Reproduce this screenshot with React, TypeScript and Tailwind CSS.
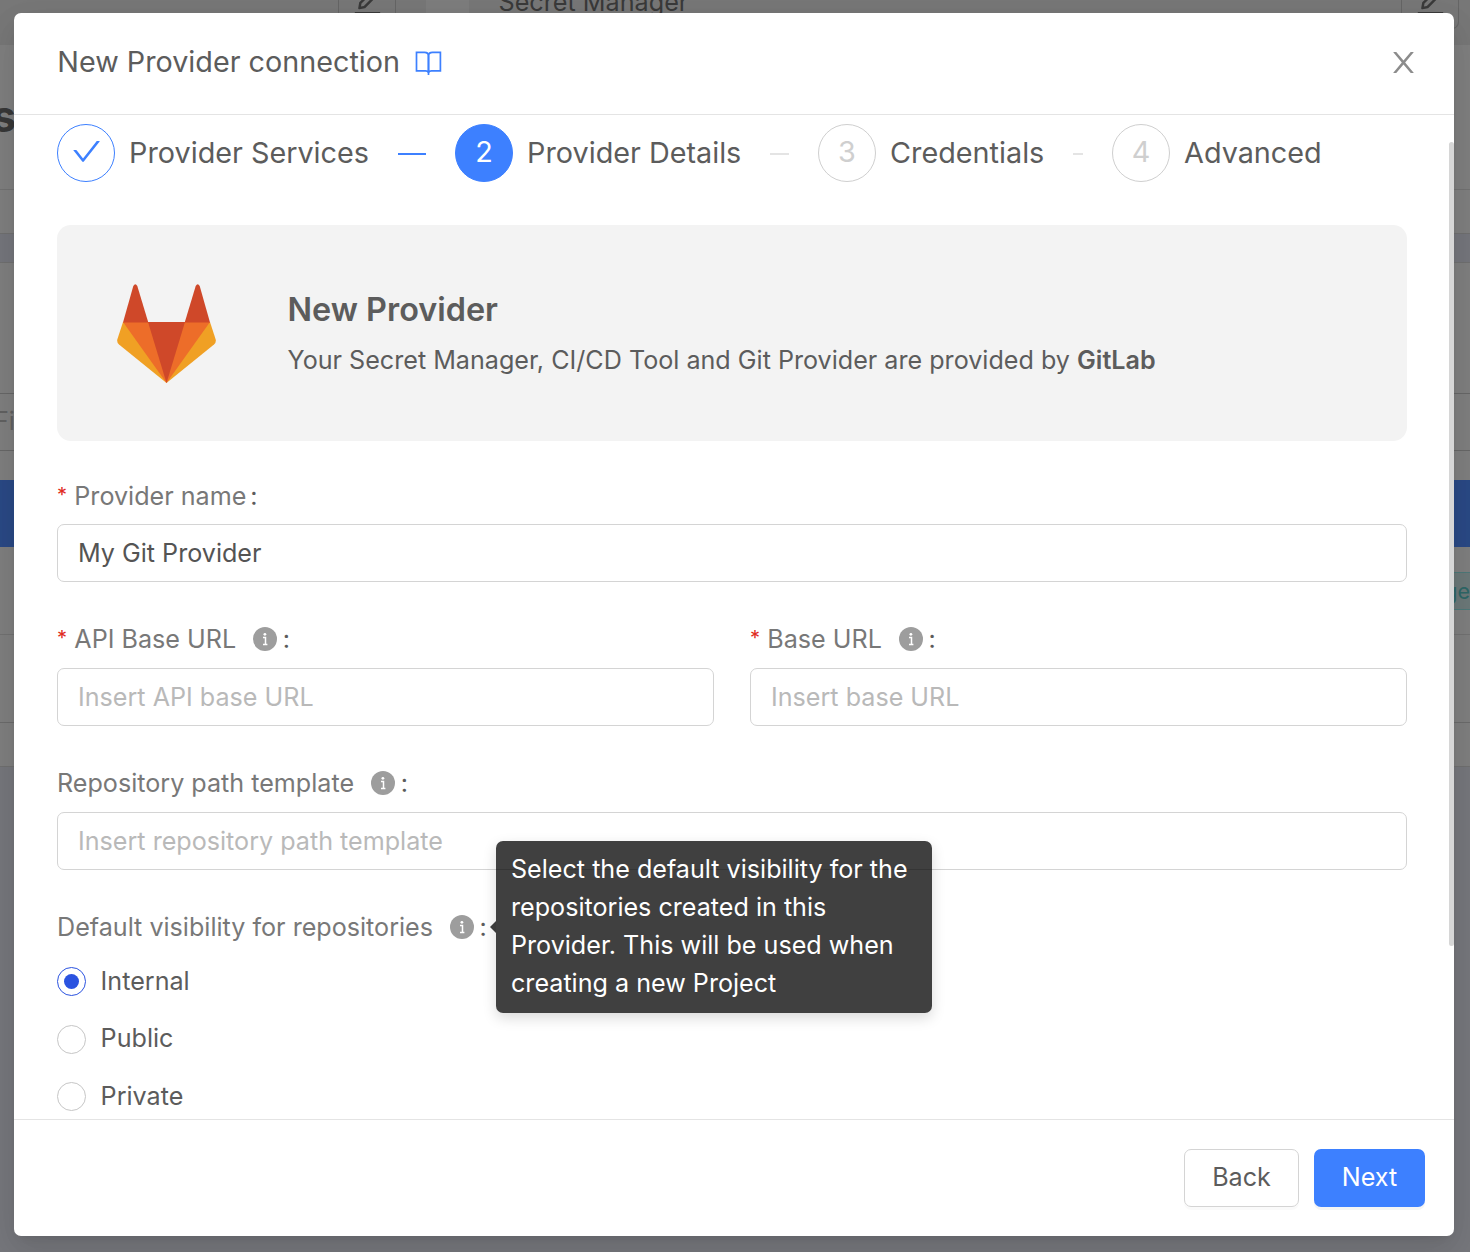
import React from "react";
import { AiOutlineEdit } from "react-icons/ai";

function CheckIcon() {
  return (
    <svg viewBox="64 64 896 896" className="-mt-[3px] h-[29px] w-[29px]" fill="currentColor">
      <path d="M912 190h-69.9c-9.8 0-19.1 4.500-25.1 12.200L404.700 724.500 207 474a32 32 0 0 0-25.100-12.200H112c-6.700 0-10.400 7.700-6.300 12.900l273.900 347c12.800 16.200 37.400 16.200 50.300 0l488.400-618.900c4.100-5.100.4-12.800-6.300-12.800z" />
    </svg>
  );
}

function CloseIcon() {
  return (
    <svg viewBox="64 64 896 896" className="ml-auto h-[29px] w-[29px] text-[#8c8c8c]" fill="currentColor">
      <path d="M563.8 512l262.500-312.900c4.400-5.200.7-13.100-6.100-13.100h-79.800c-4.700 0-9.200 2.100-12.300 5.700L511.600 449.800 295.100 191.700c-3-3.600-7.500-5.700-12.300-5.700H203c-6.800 0-10.500 7.900-6.100 13.100L459.400 512 196.900 824.900A7.950 7.950 0 0 0 203 838h79.800c4.700 0 9.200-2.100 12.300-5.700l216.500-258.100 216.500 258.100c3 3.600 7.500 5.700 12.300 5.700h79.800c6.800 0 10.500-7.900 6.100-13.100L563.800 512z" />
    </svg>
  );
}

function BookIcon() {
  return (
    <svg viewBox="0 0 27 27" className="h-[27px] w-[27px]" fill="none" stroke="#3d80ff" strokeWidth="1.7">
      <path d="M1.500 2.400H9.500Q13.500 2.400 13.500 6V22.500Q13 20.900 10.500 20.900H1.500Z" />
      <path d="M25.400 2.400H17.500Q13.500 2.400 13.500 6V22.500Q14 20.900 16.500 20.900H25.400Z" />
      <path d="M13.500 21V25" />
    </svg>
  );
}

function InfoIcon() {
  return (
    <svg viewBox="0 0 24 24" className="mb-[2px] ml-[16.6px] h-6 w-6">
      <circle cx="12" cy="12" r="12" fill="#9d9d9d" />
      <circle cx="11.900" cy="7.300" r="1.400" fill="#fff" />
      <path d="M10 10.400H12.500V17.300M10 17.400H14.400" fill="none" stroke="#fff" strokeWidth="1.500" />
    </svg>
  );
}

function GitLabLogo() {
  return (
    <svg viewBox="0 0 99 99" className="h-[99px] w-[99px] shrink-0">
      <path fill="#f0a024" d="M6 38 L0.3 55.5 Q-0.3 58.5 2 60.5 L49.5 99 L97 60.5 Q99.300 58.5 98.700 55.5 L93 38 Z" />
      <path fill="#ed6d29" d="M6 38 H93 L49.5 99 Z" />
      <path fill="#cf4829" d="M31 38 H68 L49.5 99 Z" />
      <path fill="#cf4829" d="M6 38.500 L16.300 2 Q18.300 -1.500 20.300 2 L31.300 38.500 Z" />
      <path fill="#cf4829" d="M93 38.500 L82.700 2 Q80.700 -1.500 78.700 2 L67.700 38.500 Z" />
    </svg>
  );
}

function Step({ n, title, state, width, line }: { n: number; title: string; state: "done" | "active" | "wait"; width: string; line?: string }) {
  const ring =
    state === "done"
      ? "border-[#3d80ff] text-[#3d80ff]"
      : state === "active"
        ? "border-[#3d80ff] bg-[#3d80ff] text-white"
        : "border-[#cfcfcf] text-[#cfcfcf]";
  return (
    <div className={`flex items-center ${width}`}>
      <div className={`flex h-[58px] w-[58px] shrink-0 items-center justify-center rounded-full border text-[28.8px] leading-none ${ring}`}>
        {state === "done" ? <CheckIcon /> : <span className="-mt-[2px]">{n}</span>}
      </div>
      <span className="ml-[14.1px] whitespace-nowrap text-[28.78px] text-[#5c5c5c]">{title}</span>
      {line && <div className={`mx-[29px] mt-[2px] h-[2px] flex-1 ${line}`} />}
    </div>
  );
}

function Label({ text, required, info }: { text: string; required?: boolean; info?: boolean }) {
  return (
    <div className="mb-2 flex h-10 items-center whitespace-nowrap text-[#787878]">
      {required && <span className="mr-[7.3px] mb-[5px] w-[10px] text-[20px] text-[#e02a22]">*</span>}
      <span>{text}</span>
      {info && <InfoIcon />}
      <span className={info ? "ml-[6px] text-[#5c5c5c]" : "ml-[4px] text-[#5c5c5c]"}>:</span>
    </div>
  );
}

function Field({ value, placeholder }: { value?: string; placeholder?: string }) {
  return (
    <input
      defaultValue={value}
      placeholder={placeholder}
      className="block h-[58px] w-full rounded-[7px] border border-[#d4d4d4] bg-white px-5 text-[#545454] outline-none placeholder:text-[#b9b9b9]"
    />
  );
}

function Radio({ label, checked }: { label: string; checked?: boolean }) {
  return (
    <div className="flex h-[57.4px] items-center">
      <span className={`flex h-[29px] w-[29px] items-center justify-center rounded-full border ${checked ? "border-[#2b53e0]" : "border-[#c6c6c6]"}`}>
        {checked && <span className="h-[15px] w-[15px] rounded-full bg-[#2b53e0]" />}
      </span>
      <span className="ml-[14.6px] text-[#5c5c5c]">{label}</span>
    </div>
  );
}

function Backdrop() {
  return (
    <div className="flex h-full flex-col bg-[#808080]">
      <div className="flex h-[45px] shrink-0 items-start bg-[#787878] text-[#3a3a3a]">
        <div className="ml-[338px] flex h-[29px] w-[58px] justify-center rounded-b-[7px] border border-t-0 border-[#666]">
          <AiOutlineEdit className="-mt-[15px] h-[33px] w-[33px] shrink-0" />
        </div>
        <div className="ml-[30px] h-full w-[43px] bg-[#7e7e7e]" />
        <span className="-mt-[17px] ml-[29.500px] text-[25.2px] leading-[38px]">Secret Manager</span>
        <div className="mr-[11px] ml-auto flex h-[29px] w-[58px] justify-center rounded-b-[7px] border border-t-0 border-[#666]">
          <AiOutlineEdit className="-mt-[15px] h-[33px] w-[33px] shrink-0" />
        </div>
      </div>
      <div className="h-[145px] shrink-0 border-b border-[#737373]">
        <div className="-ml-[8px] pt-[42px] text-[43.2px] leading-[58px] font-bold text-[#383838]">s</div>
      </div>
      <div className="h-[43px] shrink-0" />
      <div className="h-[30px] shrink-0 border-y border-[#717171] bg-[#76777d]" />
      <div className="h-[130px] shrink-0" />
      <div className="flex h-[58px] shrink-0 items-center border-y border-[#686868] text-[#626262]">
        <span className="-ml-[6px]">Filter</span>
      </div>
      <div className="h-[29px] shrink-0" />
      <div className="h-[67px] shrink-0 bg-[#2b4a87]" />
      <div className="flex h-[88px] shrink-0 items-start justify-end overflow-hidden border-b border-[#737373] pt-[25px]">
        <div className="h-[38px] border-y border-[#4f7a7a] bg-[#6d7a7a] text-[21.6px] leading-[36px] text-[#2f6868]">Storage</div>
      </div>
      <div className="h-[88px] shrink-0 border-b border-[#6c6c6c]" />
      <div className="h-[43px] shrink-0" />
      <div className="flex-1 border-t border-[#717171] bg-[#77787d]" />
    </div>
  );
}

export default function App() {
  return (
    <div className="relative h-[1252px] w-[1470px] overflow-hidden font-['Inter',sans-serif] text-[25.13px]">
      <Backdrop />
      <div className="absolute top-[13px] left-[14px] flex h-[1223px] w-[1440px] flex-col rounded-[7px] bg-white shadow-[0_11px_29px_rgba(0,0,0,0.08),0_5px_11px_-7px_rgba(0,0,0,0.12),0_16px_50px_14px_rgba(0,0,0,0.05)]">
        <header className="flex h-[102px] shrink-0 items-center border-b border-[#e4e4e4] pr-[36px] pb-[3px] pl-[43.3px]">
          <h1 className="text-[28.75px] text-[#5c5c5c]">New Provider connection</h1>
          <span className="ml-[15px] pt-[2px]"><BookIcon /></span>
          <CloseIcon />
        </header>

        <main className="flex h-[1004px] shrink-0 overflow-hidden">
          <div className="w-[1393px] pt-[9px] pl-[43px]">
            <div className="flex">
              <Step n={1} title="Provider Services" state="done" width="w-[398px]" line="bg-[#3d80ff]" />
              <Step n={2} title="Provider Details" state="active" width="w-[363px]" line="bg-[#e4e4e4]" />
              <Step n={3} title="Credentials" state="wait" width="w-[294px]" line="bg-[#e4e4e4]" />
              <Step n={4} title="Advanced" state="wait" width="w-[295px]" />
            </div>

            <section className="mt-[43px] flex h-[216px] items-center rounded-[14px] bg-[#f3f3f3] pl-[60px]">
              <GitLabLogo />
              <div className="ml-[71.5px] text-[#5c5c5c]">
                <h2 className="text-[32.4px] leading-[50px] font-semibold">New Provider</h2>
                <p className="mt-[5px] mb-px leading-[40px]">
                  Your Secret Manager, CI/CD Tool and Git Provider are provided by <b className="font-semibold">GitLab</b>
                </p>
              </div>
            </section>

            <div className="mt-[36px]">
              <Label text="Provider name" required />
              <div className="-mt-px">
                <Field value="My Git Provider" />
              </div>
            </div>
            <div className="mt-[38px] grid grid-cols-2 gap-9">
              <div>
                <Label text="API Base URL" required info />
                <Field placeholder="Insert API base URL" />
              </div>
              <div>
                <Label text="Base URL" required info />
                <Field placeholder="Insert base URL" />
              </div>
            </div>
            <div className="mt-[38px]">
              <Label text="Repository path template" info />
              <Field placeholder="Insert repository path template" />
            </div>
            <div className="relative mt-[38px]">
              <Label text="Default visibility for repositories" info />
              <div className="-mt-[3px]">
                <Radio label="Internal" checked />
                <Radio label="Public" />
                <Radio label="Private" />
              </div>
              <div className="absolute -top-[67px] left-[439px] h-[172px] w-[436px] rounded-[7px] bg-black/75 px-[15px] py-[9px] leading-[38px] whitespace-nowrap text-white shadow-[0_5px_14px_rgba(0,0,0,0.15)]">
                Select the default visibility for the
                <br />
                repositories created in this
                <br />
                Provider. This will be used when
                <br />
                creating a new Project
                <div className="absolute top-[80px] -left-[6px] h-0 w-0 border-y-[6px] border-r-[6px] border-y-transparent border-r-black/75" />
              </div>
            </div>
          </div>
          <div className="ml-auto mt-[27px] h-[804px] w-[5px] rounded-full bg-[#d6d6d6]" />
        </main>

        <footer className="flex flex-1 items-start justify-end gap-[15px] border-t border-[#e4e4e4] pt-[29px] pr-[29px]">
          <button className="h-[58px] w-[115px] rounded-[7px] border border-[#d4d4d4] text-[#5c5c5c] shadow-[0_3px_0_rgba(0,0,0,0.02)]">Back</button>
          <button className="h-[58px] w-[111px] rounded-[7px] bg-[#3d80ff] text-white shadow-[0_3px_0_rgba(0,0,0,0.04)]">Next</button>
        </footer>
      </div>
    </div>
  );
}
